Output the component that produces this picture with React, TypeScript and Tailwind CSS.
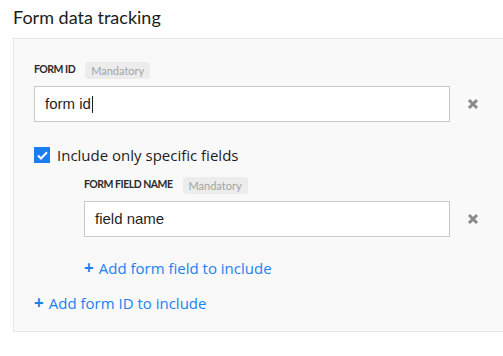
import React from 'react';

const ui = { fontFamily: '"Open Sans", "Noto Sans", sans-serif' };
const narrow = { fontFamily: 'Lato, "Open Sans", sans-serif' };
const arial = { fontFamily: '"Liberation Sans", Arial, sans-serif' };

function RemoveIcon() {
  return (
    <svg width="12" height="12" viewBox="0 0 12 12" className="shrink-0">
      <path d="M2 2 L10 10 M10 2 L2 10" stroke="#8a8a8a" strokeWidth="3" />
    </svg>
  );
}

function FieldLabel({ label }: { label: string }) {
  return (
    <div className="flex items-center gap-[10px] h-4" style={narrow}>
      <span className="text-[10.5px] font-bold tracking-[-0.5px] text-[#2b2b2b]">{label}</span>
      <span className="h-[17px] px-[6px] rounded-[3px] bg-[#ececec] text-[11px] leading-[17px] text-[#a3a3a3]">
        Mandatory
      </span>
    </div>
  );
}

function TextRow({ value, width, caret }: { value: string; width: string; caret?: boolean }) {
  return (
    <div className="flex items-center mt-2">
      <div className={`${width} h-9 border border-[#c8c8c8] bg-white flex items-center px-[10px]`}>
        <span className="text-[15px] text-[#1f1f1f]" style={arial}>
          {value}
        </span>
        {caret && <span className="w-px h-[17px] bg-[#1f1f1f] ml-px" />}
      </div>
      <div className="ml-[17px]">
        <RemoveIcon />
      </div>
    </div>
  );
}

function AddLink({ text }: { text: string }) {
  return (
    <button className="flex items-center h-5 text-[15px] text-[#1a82f0] text-left">
      <span className="font-bold mr-[5px] text-[17px] leading-5">+</span>
      {text}
    </button>
  );
}

export default function App() {
  return (
    <div className="w-[503px] h-[356px] bg-white overflow-hidden pl-[13px]" style={ui}>
      <h1 className="pt-[3px] text-[18px] leading-[28px] text-[#1c1c1c]" style={narrow}>
        Form data tracking
      </h1>
      <section className="mt-[7px] w-[520px] border border-[#e6e6e6] bg-[#f9f9f9] pl-5 pt-[23px] pb-[18px]">
        <FieldLabel label="FORM ID" />
        <TextRow value="form id" width="w-[416px]" caret />

        <label className="flex items-center gap-[7px] mt-[25px] h-4">
          <span className="w-4 h-4 bg-[#1a7ef0] flex items-center justify-center">
            <svg width="11" height="9" viewBox="0 0 11 9">
              <path d="M1 4.5 L4 7.5 L10 1.2" fill="none" stroke="white" strokeWidth="2" />
            </svg>
          </span>
          <span className="text-[15px] text-[#1c1c1c]">Include only specific fields</span>
        </label>

        <div className="pl-[50px] mt-[14px]">
          <FieldLabel label="FORM FIELD NAME" />
          <TextRow value="field name" width="w-[366px]" />
          <div className="mt-[21px]">
            <AddLink text="Add form field to include" />
          </div>
        </div>

        <div className="mt-[15px]">
          <AddLink text="Add form ID to include" />
        </div>
      </section>
    </div>
  );
}
